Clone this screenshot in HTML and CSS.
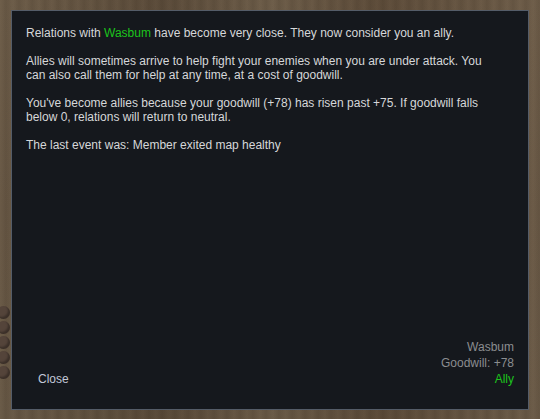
FILE: index.html
```html
<!DOCTYPE html>
<html>
<head>
<meta charset="utf-8">
<link rel="stylesheet" href="styles.css">
</head>
<body>
<div class="scene">
  <div class="stones">
    <span class="stone"></span>
    <span class="stone"></span>
    <span class="stone"></span>
    <span class="stone"></span>
    <span class="stone"></span>
  </div>
  <div class="dialog">
    <div class="body">
      <p>Relations with <span class="green">Wasbum</span> have become very close. They now consider you an ally.</p>
      <p>Allies will sometimes arrive to help fight your enemies when you are under attack. You can also call them for help at any time, at a cost of goodwill.</p>
      <p>You've become allies because your goodwill (+78) has risen past +75. If goodwill falls below 0, relations will return to neutral.</p>
      <p>The last event was: Member exited map healthy</p>
    </div>
    <div class="footer">
      <div class="close">Close</div>
      <div class="info">
        <div class="muted">Wasbum</div>
        <div class="muted">Goodwill: +78</div>
        <div class="green">Ally</div>
      </div>
    </div>
  </div>
</div>
</body>
</html>
```
FILE: styles.css
```css
html, body {
  margin: 0;
  padding: 0;
}
body {
  width: 540px;
  height: 419px;
  overflow: hidden;
  font-family: "Liberation Sans", Arial, sans-serif;
  font-size: 12px;
}
.scene {
  position: relative;
  width: 540px;
  height: 419px;
  padding: 10px 0 0 11px;
  box-sizing: border-box;
  background:
    repeating-linear-gradient(90deg, rgba(0,0,0,0) 0px, rgba(30,20,10,0.12) 6px, rgba(0,0,0,0) 13px),
    linear-gradient(90deg, rgba(0,0,0,0) 0%, rgba(40,25,15,0.25) 30%, rgba(0,0,0,0) 50%, rgba(60,40,25,0.3) 70%, rgba(120,100,80,0.2) 100%),
    linear-gradient(180deg, #6f5f4b 0%, #6a5a47 50%, #6b5c49 100%);
}
.stones {
  position: absolute;
  left: -3px;
  top: 306px;
  display: flex;
  flex-direction: column;
  gap: 2px;
}
.stone {
  display: block;
  width: 13px;
  height: 13px;
  border-radius: 50%;
  background: #54443a;
  box-shadow: inset -2px -2px 2px rgba(0,0,0,0.3);
}
.dialog {
  width: 518px;
  height: 400px;
  box-sizing: border-box;
  border: 1px solid #545c68;
  background: #15181d;
  padding: 15px 14px 22px 14px;
  display: flex;
  flex-direction: column;
  color: #d6d7d9;
}
.body {
  padding-right: 20px;
}
.body p {
  margin: 0 0 14px 0;
  line-height: 14px;
}
.green {
  color: #1cc41c;
}
.footer {
  margin-top: auto;
  display: flex;
  justify-content: space-between;
  align-items: flex-end;
}
.close {
  color: #c2c7d8;
  padding-left: 12px;
  line-height: 16px;
}
.info {
  text-align: right;
  line-height: 16px;
}
.muted {
  color: #8b8d90;
}
```
